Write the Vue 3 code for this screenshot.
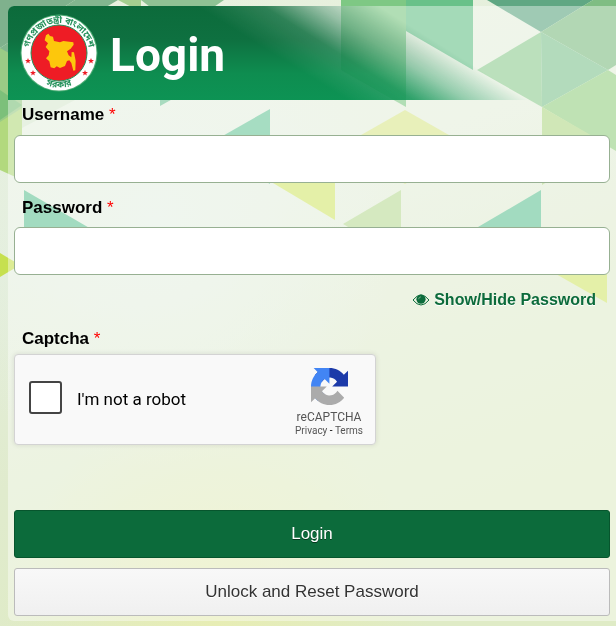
<script setup>
import { ref } from 'vue';

const username = ref('');
const password = ref('');
const visible = ref(false);
const human = ref(false);

// background triangles, back to front
const shapes = [
    { points: '0,0 75,0 0,48', fill: '#7fb18d' },
    { points: '75,0 118,0 0,70 0,48', fill: '#82b68f' },
    { points: '118,0 141,0 141,12', fill: '#a5cf90' },
    { points: '141,0 224,0 180,30', fill: '#8fc294' },
    { points: '0,48 75,90 0,132', fill: '#9acb86' },
    { points: '0,90 22,105 0,120', fill: '#7cc07a' },
    { points: '0,122 22,108 22,180 0,170', fill: '#b2d97e' },
    { points: '22,100 75,100 22,128', fill: '#d7e8cf' },
    { points: '160,60 196,86 160,106', fill: '#6fc394' },
    { points: '24,190 148,262 24,262', fill: '#65c496' },
    { points: '270,109 270,184 205,146', fill: '#6cc69a' },
    { points: '0,253 20,265 0,277', fill: '#c6e04f' },
    { points: '341,0 406,0 406,107 341,70', fill: '#7ec884' },
    { points: '406,0 473,0 473,70 406,31', fill: '#68c189' },
    { points: '487,0 593,0 541,32', fill: '#60a783' },
    { points: '541,32 593,0 616,0 616,65 608,70', fill: '#7fbd83' },
    { points: '477,70 541,32 542,107', fill: '#8ecb8f' },
    { points: '541,32 608,70 542,107', fill: '#80c390' },
    { points: '608,70 616,75 616,151 542,107', fill: '#94cf82' },
    { points: '542,107 608,145 542,185', fill: '#b1d888' },
    { points: '405,110 470,147 405,184 340,147', fill: '#d9e78d' },
    { points: '273,183 335,146 335,220', fill: '#d3e76f' },
    { points: '343,224 401,190 401,258', fill: '#b9db96' },
    { points: '478,227 541,190 541,262', fill: '#65c496' },
    { points: '540,265 607,228 607,303', fill: '#d3e76f' },
];

const stars = [
    [28, 61],
    [33, 73],
    [85, 73],
    [91, 61],
];
</script>

<template>
    <svg class="backdrop" viewBox="0 0 616 626" preserveAspectRatio="xMidYMin slice" aria-hidden="true">
        <defs>
            <linearGradient id="base" x1="0" y1="0" x2="0.35" y2="1">
                <stop offset="0" stop-color="#e9f2df" />
                <stop offset="0.4" stop-color="#e4eedb" />
                <stop offset="0.7" stop-color="#e0ebcd" />
                <stop offset="1" stop-color="#dfebc6" />
            </linearGradient>
            <radialGradient id="mist" cx="0.25" cy="0.35" r="0.4">
                <stop offset="0" stop-color="#e5f0e4" />
                <stop offset="1" stop-color="#e5f0e4" stop-opacity="0" />
            </radialGradient>
            <radialGradient id="glow" cx="0.35" cy="1" r="0.35">
                <stop offset="0" stop-color="#e7edb4" />
                <stop offset="1" stop-color="#e7edb4" stop-opacity="0" />
            </radialGradient>
        </defs>
        <rect width="616" height="626" fill="url(#base)" />
        <rect width="616" height="626" fill="url(#mist)" />
        <rect width="616" height="626" fill="url(#glow)" />
        <polygon v-for="(s, i) in shapes" :key="i" :points="s.points" :fill="s.fill" />
    </svg>

    <main class="panel">
        <header class="banner">
            <svg class="seal" viewBox="0 0 78 78" role="img" aria-label="Government of Bangladesh seal">
                <defs>
                    <path id="arc-top" d="M13 54 A30 30 0 1 1 65 54" />
                    <path id="arc-bottom" d="M14 63 A35 35 0 0 0 64 63" />
                </defs>
                <circle cx="39" cy="39" r="38.500" fill="#4fae76" />
                <circle cx="39" cy="39" r="37.500" fill="#fff" />
                <circle cx="39" cy="39" r="28" fill="#ee1c25" stroke="#23915a" />
                <path
                    fill="#fdc70c"
                    transform="translate(-10 -6) scale(.3333)"
                    d="M108 82L115 77 120 84 129 86 132 99 150 103 160 99 190 103 191 110 182 122 171 130 176 142 184 148 185 132 192 133 197 158 196 187 190 188 184 165 178 157 171 159 165 174 150 180 140 175 133 181 122 178 118 160 108 151 116 142 118 130 107 117 114 106 104 97z"
                />
                <text class="seal-text">
                    <textPath href="#arc-top" startOffset="50%" text-anchor="middle">গণপ্রজাতন্ত্রী বাংলাদেশ</textPath>
                </text>
                <text class="seal-text">
                    <textPath href="#arc-bottom" startOffset="50%" text-anchor="middle">সরকার</textPath>
                </text>
                <path
                    v-for="([x, y], i) in stars"
                    :key="i"
                    fill="#ee1c25"
                    :transform="`translate(${x - 20} ${y - 14})`"
                    d="M0-3L.8-1 3-1 1.200.4 1.900 2.600 0 1.300-1.900 2.600-1.200.4-3-1-.8-1z"
                />
            </svg>
            <h1>Login</h1>
        </header>

        <form class="body" @submit.prevent>
            <label class="label" for="username">Username <span class="req">*</span></label>
            <input id="username" v-model="username" class="text" type="text" autocomplete="username" />

            <label class="label second" for="password">Password <span class="req">*</span></label>
            <input
                id="password"
                v-model="password"
                class="text"
                :type="visible ? 'text' : 'password'"
                autocomplete="current-password"
            />

            <a class="toggle" href="#" @click.prevent="visible = !visible">
                <svg viewBox="0 0 18 12" aria-hidden="true">
                    <path d="M1 6Q9-4 17 6Q9 16 1 6z" fill="none" stroke="currentColor" />
                    <circle cx="9" cy="5.200" r="4.600" fill="currentColor" />
                    <path d="M6.600 5.200Q6.700 3 9 2.800" fill="none" stroke="#8fbf9c" stroke-width=".7" />
                </svg>
                <span>Show/Hide Password</span>
            </a>

            <p class="label">Captcha <span class="req">*</span></p>
            <div class="captcha">
                <input id="human" v-model="human" type="checkbox" />
                <label for="human">I'm not a robot</label>
                <div class="brand">
                    <svg viewBox="0 0 64 64" aria-hidden="true">
                        <path
                            fill="#1c3aa9"
                            d="M64 31.955l-.033-1.370V4.687l-7.160 7.160C50.948 4.674 42.033.093 32.050.093c-10.400 0-19.622 4.960-25.458 12.640l11.736 11.860a15.550 15.550 0 0 1 4.754-5.334c2.050-1.600 4.952-2.906 8.968-2.906.485 0 .860.057 1.135.163 4.976.393 9.288 3.140 11.828 7.124l-8.307 8.307L64 31.953"
                        />
                        <path
                            fill="#4285f4"
                            d="M31.862.094l-1.370.033H4.594l7.160 7.160C4.580 13.147 0 22.060 0 32.046c0 10.400 4.960 19.622 12.640 25.458L24.500 45.768a15.550 15.550 0 0 1-5.334-4.754c-1.600-2.050-2.906-4.952-2.906-8.968 0-.485.057-.860.163-1.135.393-4.976 3.140-9.288 7.124-11.828l8.307 8.307L31.860.095"
                        />
                        <path
                            fill="#ababab"
                            d="M.001 32.045l.033 1.370v25.898l7.160-7.160c5.860 7.173 14.774 11.754 24.760 11.754 10.400 0 19.622-4.960 25.458-12.640l-11.736-11.860a15.550 15.550 0 0 1-4.754 5.334c-2.050 1.600-4.952 2.906-8.968 2.906-.485 0-.860-.057-1.135-.163-4.976-.393-9.288-3.140-11.828-7.124l8.307-8.307L0 32.047"
                        />
                    </svg>
                    <span class="name">reCAPTCHA</span>
                    <span class="links"><a href="#">Privacy</a> - <a href="#">Terms</a></span>
                </div>
            </div>

            <button class="btn primary" type="submit">Login</button>
            <button class="btn" type="button">Unlock and Reset Password</button>
        </form>
    </main>
</template>

<style>
body {
    background: #e4eed2;
}
</style>

<style scoped>
.backdrop {
    position: fixed;
    inset: 0;
    width: 100%;
    height: 100%;
    z-index: -1;
}

.panel {
    margin: 6px 0 5px 8px;
    background: rgba(255, 255, 255, .4);
    border-radius: 6px 0 0 6px;
    font-family: "Liberation Sans", Arial, sans-serif;
    font-size: 17px;
    line-height: 20px;
    color: #000;
    overflow: hidden;
}

.banner {
    display: flex;
    align-items: center;
    gap: 12px;
    height: 94px;
    padding-left: 12px;
    position: relative;
}

/* diagonal fade into the backdrop */
.banner::before {
    content: "";
    position: absolute;
    inset: 0;
    background: linear-gradient(#0c6b3b, #0e7040 35%, #0e8d50 72%, #0d9354);
    -webkit-mask-image: linear-gradient(32deg, #000 180px, rgba(0, 0, 0, .85) 215px, rgba(0, 0, 0, .4) 243px, transparent 276px);
    mask-image: linear-gradient(32deg, #000 180px, rgba(0, 0, 0, .85) 215px, rgba(0, 0, 0, .4) 243px, transparent 276px);
}

.seal,
h1 {
    position: relative;
}

.seal {
    width: 78px;
    height: 78px;
}

.seal-text {
    font-family: "Noto Sans Bengali", "Noto Sans", sans-serif;
    font-size: 9px;
    font-weight: 700;
    fill: #23915a;
}

h1 {
    margin: 0;
    padding-top: 4px;
    color: #fff;
    font-family: Roboto, sans-serif;
    font-size: 46px;
    line-height: 60px;
    font-weight: 700;
}

.body {
    display: flex;
    flex-direction: column;
    padding: 5px 6px;
}

.label {
    margin: 0 0 10px 8px;
    font-weight: 700;
}

.label.second {
    margin-top: 15px;
    margin-bottom: 9px;
}

.req {
    color: #f00;
    font-weight: 400;
}

.text {
    box-sizing: border-box;
    width: 100%;
    height: 48px;
    padding: 0 12px;
    border: 1px solid #97b092;
    border-radius: 6px;
    background: #fff;
    font: inherit;
}

.toggle {
    display: flex;
    align-items: center;
    gap: 4px;
    align-self: flex-end;
    margin: 15px 14px 19px 0;
    color: #0c6b3b;
    font-size: 16px;
    font-weight: 700;
    text-decoration: none;
    text-shadow: 0 1px 0 #fff;
}

.toggle svg {
    width: 18px;
    height: 12px;
}

p.label {
    margin-bottom: 5px;
}

.captcha {
    display: flex;
    align-items: center;
    box-sizing: border-box;
    width: 362px;
    max-width: 100%;
    height: 91px;
    margin-bottom: 65px;
    padding: 0 12px 0 14px;
    border: 1px solid #d3d3d3;
    border-radius: 4px;
    background: #f9f9f9;
    box-shadow: 0 0 4px 1px rgba(0, 0, 0, .08);
    font-family: Roboto, sans-serif;
}

.captcha input {
    appearance: none;
    width: 33px;
    height: 33px;
    margin: 0 15px 4px 0;
    border: 2px solid #444;
    border-radius: 3px;
    background: #fff;
}

.captcha input:checked {
    background: #4caf50;
}

.captcha label {
    flex: 1;
    padding-bottom: 2px;
}

.brand {
    display: flex;
    flex-direction: column;
    align-items: center;
    padding-top: 5px;
    color: #555;
}

.brand svg {
    width: 37px;
    height: 37px;
    margin-bottom: 4px;
}

.name {
    font-size: 12px;
    line-height: 16px;
}

.links {
    font-size: 10px;
    line-height: 12px;
    color: #000;
}

.links a {
    color: #555;
    text-decoration: none;
}

.btn {
    height: 48px;
    border: 1px solid #bbb;
    border-radius: 3px;
    background: linear-gradient(#f8f8f8, #f0f0f0);
    color: #333;
    font: inherit;
    text-shadow: 0 1px 0 #fff;
    cursor: pointer;
}

.btn.primary {
    margin-bottom: 10px;
    border-color: #07552d;
    background: #0c6b3b;
    color: #fff;
    text-shadow: 0 1px 0 #06381f;
}
</style>
